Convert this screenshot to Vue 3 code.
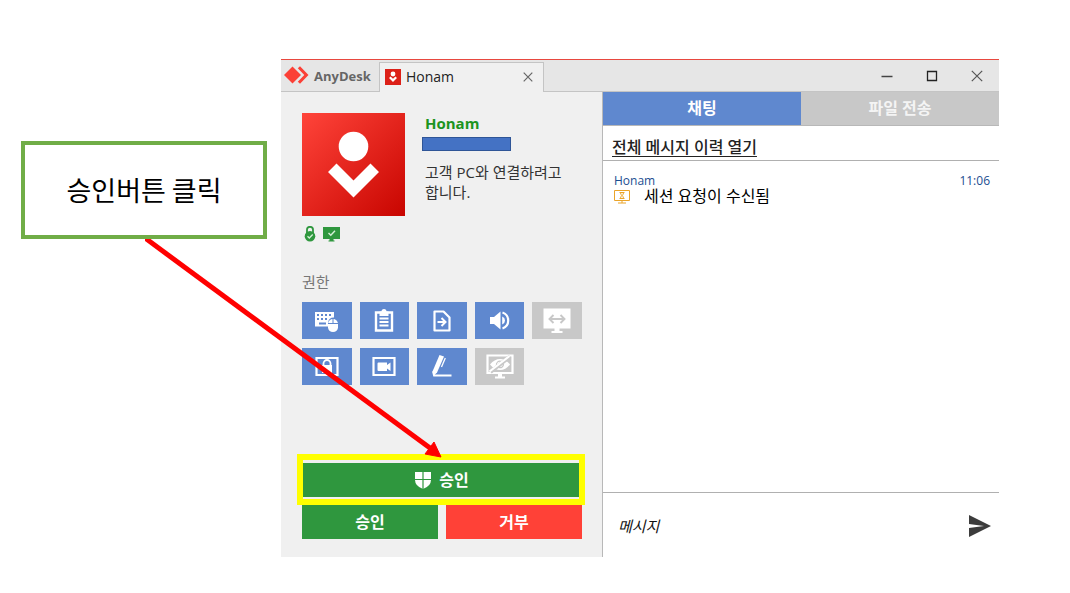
<script setup>
import { ref } from 'vue'

const message = ref('')
const permissions = [
  { id: 'input', label: '키보드 및 마우스', on: true },
  { id: 'clipboard', label: '클립보드', on: true },
  { id: 'file', label: '파일 전송 허용', on: true },
  { id: 'sound', label: '소리', on: true },
  { id: 'switch', label: '화면 전환', on: false },
  { id: 'lock', label: '입력 잠금', on: true },
  { id: 'record', label: '세션 녹화', on: true },
  { id: 'draw', label: '화이트보드', on: true },
  { id: 'privacy', label: '프라이버시 모드', on: false }
]
</script>

<template>
  <main class="page">
    <aside class="callout">승인버튼 클릭</aside>

    <section class="window">
      <header class="titlebar">
        <div class="brand">
          <svg width="26" height="20" viewBox="0 0 26 20" aria-hidden="true">
            <path d="M8.500 0.500 17 9 8.500 17.500 0 9Z" fill="#fb4036" />
            <path d="M13.800 2.300 16 .3 24.500 9 16 17.700 13.800 15.700 20.300 9Z" fill="#fb4036" />
          </svg>
          <span>AnyDesk</span>
        </div>
        <div class="session">
          <svg width="16" height="16" viewBox="0 0 16 16" aria-hidden="true">
            <rect width="16" height="16" fill="#dc2018" />
            <circle cx="8" cy="5" r="2.400" fill="#fff" />
            <path d="M4.800 8.200 8 11.400 11.200 8.200" fill="none" stroke="#fff" stroke-width="2.200" />
          </svg>
          <span class="session-name">Honam</span>
          <button class="icon-button" aria-label="탭 닫기">
            <svg width="10" height="10" viewBox="0 0 10 10"><path d="M.7.7 9.300 9.300M9.300.7.7 9.300" stroke="#666" stroke-width="1.200" /></svg>
          </button>
        </div>
        <div class="controls">
          <button class="icon-button" aria-label="최소화">
            <svg width="12" height="12" viewBox="0 0 12 12"><path d="M.5 6.500h11" stroke="#444" stroke-width="1.500" /></svg>
          </button>
          <button class="icon-button" aria-label="최대화">
            <svg width="12" height="12" viewBox="0 0 12 12"><path d="M1.500 1.500h9v9h-9z" fill="none" stroke="#222" stroke-width="1.300" /></svg>
          </button>
          <button class="icon-button" aria-label="닫기">
            <svg width="12" height="12" viewBox="0 0 12 12"><path d="M.8.8 11.200 11.200M11.200.8.8 11.200" stroke="#555" stroke-width="1.200" /></svg>
          </button>
        </div>
      </header>

      <div class="body">
        <section class="request">
          <div class="profile">
            <svg class="avatar" viewBox="0 0 103 103" aria-hidden="true">
              <defs>
                <linearGradient id="avatar-fill" x1="0" y1="0" x2="1" y2="1">
                  <stop offset="0" stop-color="#ff443a" />
                  <stop offset="1" stop-color="#c80500" />
                </linearGradient>
              </defs>
              <rect width="103" height="103" fill="url(#avatar-fill)" />
              <circle cx="51.500" cy="33.500" r="14.800" fill="#fff" />
              <path d="M26 59 34.500 50.500 51.500 67.500 68.500 50.500 77 59 51.500 84.500Z" fill="#fff" />
            </svg>
            <div class="who">
              <strong class="name">Honam</strong>
              <span class="redacted"></span>
              <p class="desc">고객 PC와 연결하려고 합니다.</p>
            </div>
          </div>

          <div class="status">
            <svg width="12" height="16" viewBox="0 0 12 16" aria-hidden="true">
              <path d="M3 7V3.800a3 3 0 0 1 6 0V7" fill="none" stroke="#2f973e" stroke-width="1.800" />
              <circle cx="6" cy="10.300" r="5.300" fill="#2f973e" />
              <path d="M3.500 10.200 5.300 12 8.700 8.500" fill="none" stroke="#d4f0d7" stroke-width="1.300" />
            </svg>
            <svg width="17" height="16" viewBox="0 0 17 16" aria-hidden="true">
              <path d="M0 1h17v12h-6.500v1.500h1v1h-6v-1h1V13H0z" fill="#2f973e" />
              <path d="M5.500 7 7.800 9.300 12 4.700" fill="none" stroke="#d4f0d7" stroke-width="1.400" />
            </svg>
          </div>

          <h2 class="heading">권한</h2>
          <div class="permissions">
            <button
              v-for="p in permissions"
              :key="p.id"
              class="permission"
              :class="{ off: !p.on }"
              :aria-label="p.label"
              :aria-pressed="p.on"
            >
              <svg v-if="p.id === 'input'" width="28" height="28" viewBox="0 0 28 28">
                <path d="M2 5h19v5.500h-.5q-4.500 0-5.500 5v4H2z" fill="#fff" />
                <path d="M4 8h2m2 0h2m2 0h2m2 0h2M4 12h2m2 0h2m2 0h2M6 16.500h7" stroke="#5f88cf" stroke-width="1.800" />
                <path d="M15 17a5 5 0 0 1 10 0v3.500a5 4.500 0 0 1-10 0z" fill="#fff" />
                <path d="M15 16.500h10M20 11.500v5" stroke="#5f88cf" stroke-width="1" />
              </svg>
              <svg v-else-if="p.id === 'clipboard'" width="28" height="28" viewBox="0 0 28 28">
                <path d="M6 5.500h16v18H6z" fill="none" stroke="#fff" stroke-width="2.400" />
                <path d="M9.500 4.500h2a2.500 2.500 0 0 1 5 0h2V9h-9z" fill="#fff" />
                <path d="M9.500 11.500h9M9.500 15h9M9.500 18.500h9" stroke="#fff" stroke-width="1.800" />
              </svg>
              <svg v-else-if="p.id === 'file'" width="28" height="28" viewBox="0 0 28 28">
                <path d="M6.500 4.500h9l6 6v13h-15z" fill="none" stroke="#fff" stroke-width="2.200" stroke-linejoin="round" />
                <path d="M9.500 15h7M13.500 11l4 4-4 4" fill="none" stroke="#fff" stroke-width="2" />
              </svg>
              <svg v-else-if="p.id === 'sound'" width="28" height="28" viewBox="0 0 28 28">
                <path d="M4 10h4l6.500-5.500v18L8 17H4z" fill="#fff" />
                <path d="M16.200 9.500q2.800 1.200 2.800 4t-2.800 4z" fill="#fff" />
                <path d="M16.500 5.500q5.700 2 5.700 8t-5.700 8" fill="none" stroke="#fff" stroke-width="2.200" />
              </svg>
              <svg v-else-if="p.id === 'switch'" width="28" height="28" viewBox="0 0 28 28">
                <path d="M.5 1.500h27v20h-11V24h3v2h-11v-2h3v-2.500H.5z" fill="#fff" />
                <path d="M7 12h14M10.500 8 6.500 12l4 4M17.500 8l4 4-4 4" fill="none" stroke="#c8c8c8" stroke-width="1.900" />
              </svg>
              <svg v-else-if="p.id === 'lock'" width="28" height="28" viewBox="0 0 28 28">
                <path d="M3.500 5h21v17h-21z" fill="none" stroke="#fff" stroke-width="2.200" />
                <path d="M9 12h10v8H9z" fill="#fff" />
                <path d="M10.500 12v-1.500a3.500 3.500 0 0 1 7 0V12" fill="none" stroke="#fff" stroke-width="1.800" />
              </svg>
              <svg v-else-if="p.id === 'record'" width="28" height="28" viewBox="0 0 28 28">
                <path d="M3.500 5h21v17h-21z" fill="none" stroke="#fff" stroke-width="2.200" />
                <path d="M8.500 9.500h8.500V12l3.500-2.500v8.500L17 15.500V18H8.500q-1 0-1-1v-6.500q0-1 1-1z" fill="#fff" />
              </svg>
              <svg v-else-if="p.id === 'draw'" width="28" height="28" viewBox="0 0 28 28">
                <path d="M11.500 2 16 3.500 9 19.500 6 22.500 4.500 18.500Z" fill="#fff" />
                <path d="M17.300 5 13.500 14" stroke="#fff" stroke-width="1.300" />
                <path d="M5 18.500 6 22.500H23.500" fill="none" stroke="#fff" stroke-width="1.800" />
              </svg>
              <svg v-else width="28" height="28" viewBox="0 0 28 28">
                <path d="M1.500 2.500h25v17.500h-25z" fill="none" stroke="#fff" stroke-width="2.200" />
                <path d="M12 20h4v3.500h3v2H9v-2h3z" fill="#fff" />
                <path d="M4 11.500q4.500-5.500 10-5.500t10 5.500q-4.500 5.500-10 5.500t-10-5.500z" fill="#fff" />
                <path d="M10.500 12.500a3.500 3.500 0 0 1 5-4M17.500 11a3.500 3.500 0 0 1-4.500 3.500" fill="none" stroke="#c8c8c8" stroke-width="1.200" />
                <path d="M4.500 19 24 3.500" stroke="#c8c8c8" stroke-width="4" />
                <path d="M3.500 18.500 23.500 3" stroke="#fff" stroke-width="2.200" />
              </svg>
            </button>
          </div>

          <div class="actions">
            <div class="elevated">
              <button class="action accept">
                <svg width="16" height="17" viewBox="0 0 16 17" aria-hidden="true">
                  <path d="M0 0h16v8q0 6-8 9-8-3-8-9z" fill="#fff" />
                  <path d="M8 0v17M0 7.500h16" stroke="#2f973e" stroke-width="1.200" />
                </svg>
                <span>승인</span>
              </button>
              <span class="highlight"></span>
            </div>
            <button class="action accept">승인</button>
            <button class="action reject">거부</button>
          </div>
        </section>

        <section class="chat">
          <nav class="tabs">
            <button class="tab active">채팅</button>
            <button class="tab">파일 전송</button>
          </nav>
          <div class="history"><a href="#history">전체 메시지 이력 열기</a></div>
          <article class="log">
            <div class="meta"><span>Honam</span><time>11:06</time></div>
            <div class="event">
              <svg width="16" height="16" viewBox="0 0 16 16" aria-hidden="true">
                <path d="M.5 2.500h15v10H.5zM4 15h8M8 12.500V15M5.500 4.500h5M5.500 10.500h5M6.500 4.500q0 2 1.500 3 1.500-1 1.500-3M6.500 10.500q0-2 1.500-3 1.500 1 1.500 3" fill="none" stroke="#eaa42a" />
              </svg>
              <span>세션 요청이 수신됨</span>
            </div>
          </article>
          <form class="composer" @submit.prevent>
            <input v-model="message" type="text" aria-label="메시지" placeholder="메시지" />
            <button class="icon-button" aria-label="보내기">
              <svg width="22" height="22" viewBox="0 0 22 22">
                <path d="M0 0 22 11 0 22V13L15 11 0 9Z" fill="#3c3c3c" />
              </svg>
            </button>
          </form>
        </section>
      </div>
    </section>

    <svg class="arrow" width="300" height="222" viewBox="0 0 300 222" aria-hidden="true">
      <path d="M0 -1 285 209" stroke="#f00" stroke-width="5" />
      <path d="M296 218 280 215 289 203Z" fill="#f00" stroke="#f00" />
    </svg>
  </main>
</template>

<style>
body {
  margin: 0;
  background: #fff;
}
</style>

<style scoped>
.page {
  position: relative;
  display: flex;
  align-items: flex-start;
  gap: 14px;
  padding: 59px 71px 36px 21px;
  font-family: "Open Sans", "Noto Sans CJK KR", sans-serif;
  font-size: 15px;
  line-height: 20px;
  color: #222;
}
.page * {
  box-sizing: border-box;
}
button,
input {
  font: inherit;
  border: 0;
  padding: 0;
  margin: 0;
  background: none;
}
svg {
  display: block;
  flex: none;
}
.callout {
  flex: 0 0 246px;
  margin-top: 82px;
  padding: 29px 0;
  border: 4px solid #70ad47;
  text-align: center;
  font-family: "Noto Sans CJK KR", sans-serif;
  font-size: 27px;
  line-height: 32px;
  color: #000;
}
.window {
  flex: 1;
  min-width: 0;
  border-top: 1px solid #e8483f;
  background: #f0f0f0;
}
.titlebar {
  display: flex;
  align-items: flex-end;
  height: 32px;
  background: #e6e6e6;
  box-shadow: inset 0 -1px #c4c4c4;
}
.brand {
  display: flex;
  align-items: center;
  gap: 4px;
  width: 98px;
  height: 32px;
  padding-left: 3px;
  font-size: 13px;
  font-weight: 700;
  color: #666;
}
.session {
  display: flex;
  align-items: center;
  gap: 5px;
  width: 165px;
  height: 30px;
  padding: 0 10px 2px 5px;
  border: 1px solid #c4c4c4;
  border-bottom: 0;
  background: #f0f0f0;
  font-size: 14px;
}
.session-name {
  flex: 1;
}
.controls {
  display: flex;
  align-items: center;
  gap: 33px;
  height: 32px;
  margin-left: auto;
  padding-right: 16px;
}
.body {
  display: grid;
  grid-template-columns: 322px 1fr;
}
.request {
  display: flex;
  flex-direction: column;
  padding: 21px 20px 18px 21px;
  border-right: 1px solid #b8b8b8;
}
.profile {
  display: flex;
  gap: 20px;
}
.avatar {
  width: 103px;
  height: 103px;
}
.who {
  display: flex;
  flex-direction: column;
}
.name {
  color: #1c9420;
}
.redacted {
  width: 89px;
  height: 14px;
  margin: 4px 0 11px -3px;
  border: 1px solid #2f5597;
  background: #4472c4;
}
.desc {
  margin: 0;
  color: #333;
  word-break: keep-all;
}
.status {
  display: flex;
  gap: 7px;
  margin-top: 10px;
  padding-left: 2px;
}
.heading {
  margin: 30px 0 10px;
  font-size: 15px;
  font-weight: 400;
  color: #777;
}
.permissions {
  display: grid;
  grid-template-columns: repeat(5, 1fr);
  gap: 9px 8px;
}
.permission {
  display: grid;
  place-items: center;
  height: 37px;
  background: #5f88cf;
}
.permission.off {
  background: #c8c8c8;
}
.actions {
  display: grid;
  grid-template-columns: 1fr 1fr;
  gap: 8px;
  margin-top: 78px;
}
.elevated {
  position: relative;
  grid-column: 1 / -1;
}
.action {
  display: flex;
  align-items: center;
  justify-content: center;
  gap: 8px;
  width: 100%;
  height: 34px;
  color: #fff;
  font-size: 16px;
  font-weight: 700;
}
.accept {
  background: #2f973e;
}
.reject {
  background: #ff4137;
}
.highlight {
  position: absolute;
  inset: -9px -3px -8px -5px;
  border: 6px solid #ff0;
  pointer-events: none;
}
.chat {
  display: flex;
  flex-direction: column;
  background: #fff;
}
.tabs {
  display: grid;
  grid-template-columns: 1fr 1fr;
  border-bottom: 1px solid #b8b8b8;
}
.tab {
  height: 33px;
  padding-bottom: 2px;
  background: #c8c8c8;
  color: #f4f4f4;
  font-size: 16px;
  font-weight: 700;
}
.tab.active {
  background: #5f88cf;
  color: #fff;
}
.history {
  padding: 11px 9px 3px;
  border-bottom: 1px solid #b0b0b0;
  font-size: 16px;
  font-weight: 500;
}
.history a {
  color: #222;
  text-underline-offset: 3px;
}
.log {
  flex: 1;
  padding: 10px 9px 10px 11px;
}
.meta {
  display: flex;
  justify-content: space-between;
  font-size: 12px;
  color: #1c4e91;
}
.event {
  display: flex;
  align-items: center;
  gap: 14px;
  margin-top: -5px;
  font-size: 16px;
  color: #000;
}
.composer {
  display: flex;
  align-items: center;
  height: 65px;
  padding: 2px 8px 0 15px;
  border-top: 1px solid #b0b0b0;
}
.composer input {
  flex: 1;
  min-width: 0;
  height: 32px;
  font-style: italic;
  outline: 0;
}
.composer input::placeholder {
  color: #111;
  opacity: 1;
}
.arrow {
  position: absolute;
  left: 145px;
  top: 239px;
  pointer-events: none;
}
</style>
